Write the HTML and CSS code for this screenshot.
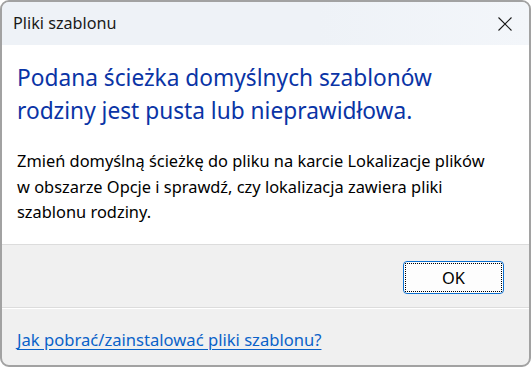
FILE: index.html
```html
<!DOCTYPE html>
<html lang="pl">
<head>
<meta charset="utf-8">
<title>Pliki szablonu</title>
<link rel="stylesheet" href="styles.css">
</head>
<body>
<div class="window">
  <div class="titlebar">
    <span class="title">Pliki szablonu</span>
    <span class="close">
      <svg width="14" height="14" viewBox="0 0 14 14"><path d="M0.5 0.5 L13.5 13.5 M13.5 0.5 L0.5 13.5" stroke="#1b1b1b" stroke-width="1.1" fill="none"/></svg>
    </span>
  </div>
  <div class="content">
    <h1 class="main">Podana ścieżka domyślnych szablonów rodziny jest pusta lub nieprawidłowa.</h1>
    <p class="text">Zmień domyślną ścieżkę do pliku na karcie Lokalizacje plików w obszarze Opcje i sprawdź, czy lokalizacja zawiera pliki szablonu rodziny.</p>
  </div>
  <div class="buttons">
    <button class="btn"><span class="focus">OK</span></button>
  </div>
  <div class="footer">
    <a class="link" href="#">Jak pobrać/zainstalować pliki szablonu?</a>
  </div>
</div>
</body>
</html>
```

FILE: styles.css
```css
html, body {
  margin: 0;
  padding: 0;
  background: #ffffff;
}
body {
  font-family: "Noto Sans", "Open Sans", sans-serif;
}
.window {
  box-sizing: border-box;
  width: 531px;
  height: 367px;
  border: 2px solid #a2a2a2;
  border-radius: 9px;
  overflow: hidden;
  display: flex;
  flex-direction: column;
  background: #f0f0f0;
}
.titlebar {
  height: 43px;
  flex: none;
  display: flex;
  align-items: center;
  justify-content: space-between;
  padding: 0 17px 0 11px;
  background: linear-gradient(90deg, #eef2f7 0%, #eef2f7 60%, #f3f6fa 100%);
}
.title {
  font-size: 16.2px;
  color: #1a1a1a;
  padding-bottom: 1px;
}
.close {
  display: flex;
  width: 14px;
  height: 14px;
}
.content {
  background: #ffffff;
  height: 200px;
  flex: none;
  padding: 16px 32px 0 15px;
  box-sizing: border-box;
  border-bottom: 1px solid #dcdcdc;
}
.main {
  margin: 0;
  font-weight: normal;
  font-size: 22.7px;
  line-height: 33px;
  color: #0a34a6;
}
.text {
  margin: 21px 0 0 0;
  font-size: 16.4px;
  line-height: 25.5px;
  color: #000000;
}
.buttons {
  flex: none;
  height: 63px;
  display: flex;
  justify-content: flex-end;
  align-items: flex-start;
  padding: 16px 25px 0 0;
  box-sizing: border-box;
  border-bottom: 1px solid #dcdcdc;
  box-shadow: 0 1px 0 #ffffff;
}
.btn {
  width: 101px;
  height: 33px;
  padding: 1px;
  border: 1px solid #0a6fd0;
  border-radius: 4px;
  background: #fdfdfd;
  font-family: inherit;
  font-size: 16.4px;
  color: #000;
  display: flex;
  cursor: default;
}
.focus {
  flex: 1;
  border: 1px dotted #000;
  display: flex;
  align-items: center;
  justify-content: center;
}
.footer {
  flex: 1;
  padding: 19px 15px 0 15px;
  margin-top: 1px;
}
.link {
  font-size: 16.6px;
  color: #0a62c9;
  text-decoration: underline;
  text-underline-offset: 3px;
}
```
